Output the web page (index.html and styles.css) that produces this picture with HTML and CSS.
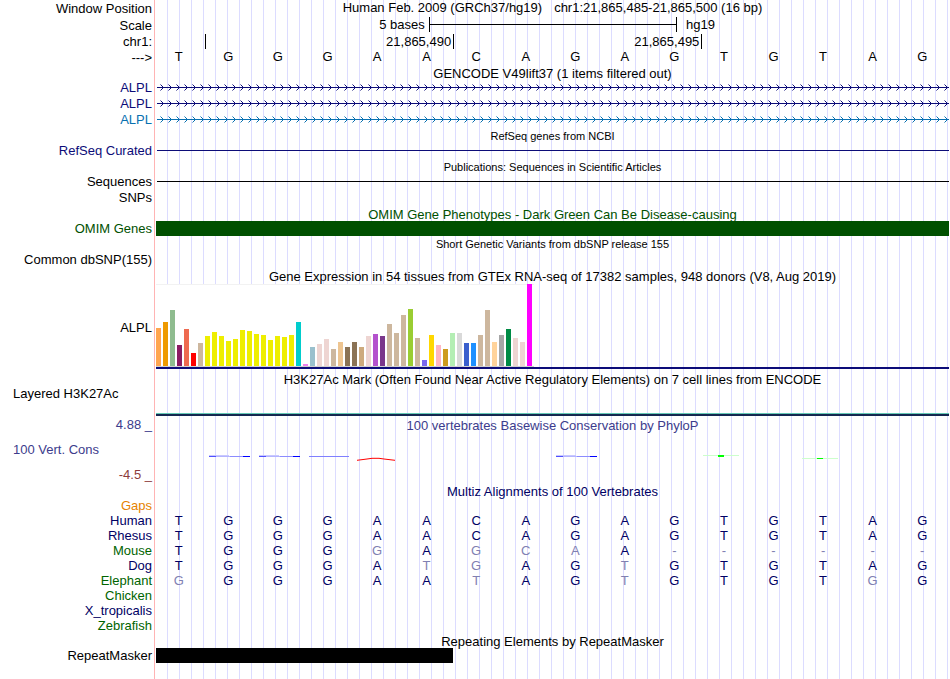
FILE: index.html
```html
<!DOCTYPE html>
<html lang="en">
<head>
  <meta charset="UTF-8" />
  <meta name="viewport" content="width=device-width, initial-scale=1.0"/>
  <title>Human chr1:21,865,485-21,865,500 - Genome Browser</title>
  <link rel="stylesheet" href="styles.css">
</head>
<body>
  <main class="tracks">
    <!-- Position and ruler -->
    <div class="row ruler-row">
      <div class="label">Window Position</div>
      <h1 class="position"><span>Human Feb. 2009 (GRCh37/hg19)</span><span>chr1:21,865,485-21,865,500 (16 bp)</span></h1>
    </div>
    <div class="row ruler-row">
      <div class="label">Scale</div>
      <div class="data scale">
        <span class="scale-size">5 bases</span>
        <span class="scale-bar"></span>
        <span class="scale-db">hg19</span>
      </div>
    </div>
    <div class="row">
      <div class="label">chr1:</div>
      <div class="data ticks">
        <span></span>
        <span>21,865,490</span>
        <span>21,865,495</span>
      </div>
    </div>
    <table class="bases reference" id="reference"></table>

    <!-- Genes -->
    <h2>GENCODE V49lift37 (1 items filtered out)</h2>
    <div class="row gene navy">
      <div class="label">ALPL</div>
      <svg class="data" height="16"><rect width="100%" height="16" fill="url(#arrows)"/></svg>
    </div>
    <div class="row gene navy">
      <div class="label">ALPL</div>
      <svg class="data" height="16"><rect width="100%" height="16" fill="url(#arrows)"/></svg>
    </div>
    <div class="row gene blue">
      <div class="label">ALPL</div>
      <svg class="data" height="16"><rect width="100%" height="16" fill="url(#arrows-blue)"/></svg>
    </div>
    <h2 class="small">RefSeq genes from NCBI</h2>
    <div class="row navy">
      <div class="label">RefSeq Curated</div>
      <div class="data line"></div>
    </div>
    <h2 class="small">Publications: Sequences in Scientific Articles</h2>
    <div class="row">
      <div class="label">Sequences</div>
      <div class="data line"></div>
    </div>
    <div class="row">
      <div class="label">SNPs</div>
    </div>
    <h2 class="green">OMIM Gene Phenotypes - Dark Green Can Be Disease-causing</h2>
    <div class="row item green">
      <div class="label">OMIM Genes</div>
      <div class="data bar"></div>
    </div>
    <h2 class="small">Short Genetic Variants from dbSNP release 155</h2>
    <div class="row dense">
      <div class="label">Common dbSNP(155)</div>
    </div>

    <!-- Expression -->
    <h2>Gene Expression in 54 tissues from GTEx RNA-seq of 17382 samples, 948 donors (V8, Aug 2019)</h2>
    <div class="row gtex">
      <div class="label">ALPL</div>
      <div class="data gtex-data">
        <div class="gtex-chart" id="gtex"></div>
      </div>
    </div>

    <h2>H3K27Ac Mark (Often Found Near Active Regulatory Elements) on 7 cell lines from ENCODE</h2>
    <div class="row h3k27">
      <div class="label left">Layered H3K27Ac</div>
      <div class="data signal"></div>
    </div>

    <!-- Conservation -->
    <div class="row cons">
      <div class="cons-labels">
        <span class="label max">4.88 _</span>
        <span class="label left">100 Vert. Cons</span>
        <span class="label min">-4.5 _</span>
      </div>
      <div class="data">
        <h2 class="violet">100 vertebrates Basewise Conservation by PhyloP</h2>
        <svg class="wiggle" viewBox="0 0 793 48" preserveAspectRatio="none">
          <defs>
            <g id="flat">
              <path d="M1 0H21V1H1z" fill="#c8c8ff"/>
              <path d="M1 1H8V2H1z" fill="#5050ff"/>
              <path d="M8 1H33V2H8z" fill="#b4b4ff"/>
              <path d="M22 1H36V2H22z" fill="#8c8cff"/>
              <path d="M35 1H42V2H35z" fill="#0000ff"/>
            </g>
          </defs>
          <use href="#flat" x="52" y="23"/>
          <use href="#flat" x="102" y="23"/>
          <path d="M153 24.5H193" stroke="#8080ff"/>
          <path d="M201 28.3L211 27L216 26.3H223L228 27L239 28.3" stroke="#ff0000" fill="none"/>
          <use href="#flat" x="399" y="23"/>
          <path d="M547 23.5H583M646 26.5H682" stroke="#ccffcc"/>
          <path d="M562 24H568" stroke="#00ff00" stroke-width="2"/>
          <path d="M661 26.5H667" stroke="#00ff00"/>
        </svg>
      </div>
    </div>

    <h2 class="multiz">Multiz Alignments of 100 Vertebrates</h2>
    <div class="row item orange">
      <div class="label">Gaps</div>
    </div>
    <table class="bases species" id="alignments"></table>

    <h2>Repeating Elements by RepeatMasker</h2>
    <div class="row item">
      <div class="label">RepeatMasker</div>
      <div class="data"><div class="bar repeat"></div></div>
    </div>
  </main>

  <!-- strand arrows shared by the gene rows -->
  <svg class="defs" width="0" height="0">
    <defs>
      <pattern id="arrows" width="8" height="16" patternUnits="userSpaceOnUse">
        <path d="M0 7.5H8" stroke="#0c0c78"/>
        <path d="M4 5h1v1h1v1h1v1h-1v1h-1v1h-1v-1h1v-1h1v-1h-1v-1h-1z" fill="#0c0c78"/>
        <path d="M3 4h1v1H3zM3 10h1v1H3z" fill="#0c0c78" opacity=".5"/>
      </pattern>
      <pattern id="arrows-blue" width="8" height="16" patternUnits="userSpaceOnUse">
        <path d="M0 7.5H8" stroke="#0870b0"/>
        <path d="M4 5h1v1h1v1h1v1h-1v1h-1v1h-1v-1h1v-1h1v-1h-1v-1h-1z" fill="#0870b0"/>
        <path d="M3 4h1v1H3zM3 10h1v1H3z" fill="#0870b0" opacity=".5"/>
      </pattern>
    </defs>
  </svg>
  <script src="script.js"></script>
</body>
</html>
```
FILE: styles.css
```css
body {
  margin: 0;
  background: white;
  color: black;
  font-family: "Liberation Sans", Arial, sans-serif;
  font-size: 13px;
  line-height: 16px;
}
.tracks {
  box-sizing: border-box;
  min-height: 100vh;
  padding-right: 1px;
  /* red divider, then a guide line every 12px */
  background:
    linear-gradient(#ffb4b4, #ffb4b4) 154px 0 / 1px 100% no-repeat,
    repeating-linear-gradient(to right, transparent 0 11px, #dcdcff 11px 12px) 156px 0 no-repeat;
  overflow: hidden;
}
h1, h2 {
  margin: 0;
  font-size: 13px;
  font-weight: normal;
  text-align: center;
}
h2 {
  margin-left: 156px;
  height: 15px;
  line-height: 18px;
  white-space: nowrap;
}
.data h2 {
  margin-left: 0;
}
.small {
  font-size: 11px;
  line-height: 16px;
}
.row {
  display: flex;
  height: 16px;
}
.ruler-row {
  height: 17px;
}
.ruler-row .label {
  line-height: 18px;
}
.label {
  box-sizing: border-box;
  flex: none;
  width: 156px;
  padding-right: 4px;
  text-align: right;
  white-space: nowrap;
}
.label.left {
  padding-left: 13px;
  text-align: left;
}
.data {
  flex: 1;
  min-width: 0;
}
.navy { color: #0c0c78; }
.blue { color: #0870b0; }
.green { color: #005000; }
.violet { color: #3c3c8c; }
.orange { color: #e68200; }

.position {
  display: flex;
  flex: 1;
  justify-content: center;
  gap: 12px;
}
.scale {
  display: flex;
}
.scale-size {
  box-sizing: border-box;
  width: 34.4%;
  padding-right: 4px;
  text-align: right;
}
.scale-bar {
  box-sizing: border-box;
  width: 31.3%;
  height: 15px;
  border: solid black;
  border-width: 0 1px;
  background: linear-gradient(black, black) 0 7px / 100% 1px no-repeat;
}
.scale-db {
  padding-left: 9px;
}
.ticks {
  display: grid;
  grid-template-columns: 6.3% 31.3% 31.3%;
}
.ticks span {
  height: 15px;
  padding-right: 2px;
  border-right: 1px solid black;
  text-align: right;
}

.bases {
  width: calc(100% - 2px);
  table-layout: fixed;
  border-collapse: collapse;
  line-height: 15px;
}
.bases th {
  width: 152px;
  padding: 0 2px 0 0;
  font-weight: normal;
  text-align: right;
}
.bases td {
  padding: 0;
  text-align: center;
}
.bases tr {
  height: 15px;
}
.reference td {
  line-height: 14px;
  vertical-align: top;
}
.species {
  color: #000064;
}
.species .green {
  color: #006400;
}
.species .mismatch {
  color: #8080b2;
}

.gene .data {
  margin-left: 1px;
}
.line {
  margin: 7px 0 8px 1px;
  background: currentColor;
}
.item {
  height: 15px;
  line-height: 15px;
}
.bar {
  height: 15px;
  background: currentColor;
}
.repeat {
  width: 37.5%;
}
.dense {
  height: 17px;
  line-height: 18px;
}

.gtex {
  box-sizing: border-box;
  height: 88px;
  padding-top: 1px;
}
.gtex .label {
  line-height: 88px;
}
.gtex-data {
  height: 83px;
  border-bottom: 2px solid #0c0c78;
}
.gtex-chart {
  box-sizing: border-box;
  display: flex;
  align-items: flex-end;
  gap: 2px;
  width: 378px;
  height: 83px;
  border-bottom: 1px solid #d0d0d0;
  background: linear-gradient(#f2f2f2, #f2f2f2) 0 0 / 100% 1px no-repeat white;
}
.gtex-chart div {
  width: 5px;
}

.h3k27 {
  height: 31px;
}
.signal {
  height: 2px;
  margin-top: 27px;
  border-top: 1px solid #64c8b4;
  background: #142850;
}

.cons {
  height: 66px;
}
.cons-labels {
  display: flex;
  flex-direction: column;
  gap: 9px;
  color: #3c3c8c;
}
.cons-labels .min {
  color: #8c3c3c;
}
.wiggle {
  display: block;
  width: 100%;
  height: 48px;
}
.multiz {
  color: #000064;
}
.defs {
  position: absolute;
}
```
FILE: script.js
```js
const reference = [["--->", "TGGGAACAGAGTGTAG"]];

const alignments = [
  ["Human", "TGGGAACAGAGTGTAG"],
  ["Rhesus", "TGGGAACAGAGTGTAG"],
  ["Mouse", "TGGGGAGCAA------"],
  ["Dog", "TGGGATGAGTGTGTAG"],
  ["Elephant", "GGGGAATAGTGTGTGG"],
  ["Chicken", ""],
  ["X_tropicalis", ""],
  ["Zebrafish", ""]
];
const greenSpecies = ["Mouse", "Elephant", "Chicken", "Zebrafish"];

// [color, height] for each GTEx tissue
const tissues = [
  ["#ffa54f", 38], ["#ee9a00", 44], ["#8fbc8f", 56], ["#8b1c62", 21], ["#ee6a50", 37], ["#ff0000", 13],
  ["#cdb79e", 23], ["#eeee00", 30], ["#eeee00", 34], ["#eeee00", 30], ["#eeee00", 25], ["#eeee00", 27],
  ["#eeee00", 36], ["#eeee00", 35], ["#eeee00", 32], ["#eeee00", 31], ["#eeee00", 26], ["#eeee00", 30],
  ["#eeee00", 29], ["#eeee00", 31], ["#00cdcd", 44], ["#ee82ee", 2], ["#9ac0cd", 19], ["#eed5d2", 22],
  ["#eed5d2", 27], ["#cdb79e", 17], ["#eec591", 24], ["#8b7355", 19], ["#8b7355", 24], ["#cdaa7d", 19],
  ["#eed5d2", 30], ["#b452cd", 32], ["#7a378b", 30], ["#cdb79e", 42], ["#cdb79e", 33], ["#cdb79e", 51],
  ["#9acd32", 57], ["#cdb79e", 28], ["#7a67ee", 6], ["#ffd700", 31], ["#ffb6c1", 21], ["#cd9b1d", 17],
  ["#b4eeb4", 33], ["#d9d9d9", 33], ["#3a5fcd", 23], ["#1e90ff", 23], ["#cdb79e", 31], ["#cdb79e", 56],
  ["#ffd39b", 24], ["#a6a6a6", 31], ["#008b45", 37], ["#eed5d2", 28], ["#eed5d2", 24], ["#ff00ff", 82]
];

function renderBases(id, rows) {
  const human = reference[0][1];
  document.getElementById(id).innerHTML = rows.map(([name, seq]) => {
    const cells = [...seq.padEnd(16)].map((base, i) =>
      `<td${base !== human[i] ? ' class="mismatch"' : ""}>${base}</td>`).join("");
    return `<tr><th scope="row"${greenSpecies.includes(name) ? ' class="green"' : ""}>${name}</th>${cells}</tr>`;
  }).join("");
}

renderBases("reference", reference);
renderBases("alignments", alignments);

document.getElementById("gtex").innerHTML = tissues.map(([color, height]) =>
  `<div style="height: ${height}px; background: ${color}"></div>`).join("");
```
